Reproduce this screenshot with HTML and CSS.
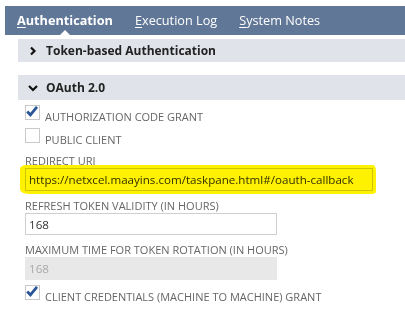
FILE: index.html
```html
<!DOCTYPE html>
<html lang="en">
<head>
  <meta charset="UTF-8" />
  <title>Integration – Authentication</title>
  <link rel="stylesheet" href="styles.css">
</head>
<body>

  <!-- TABS -->
  <nav class="tabs">
    <a class="tab active" href="#"><u>A</u>uthentication</a>
    <a class="tab" href="#"><u>E</u>xecution Log</a>
    <a class="tab" href="#"><u>S</u>ystem Notes</a>
  </nav>

  <div class="content">
    <!-- TOKEN SECTION -->
    <div class="sec-head">
      <svg class="chev" width="10" height="10" viewBox="0 0 10 10"><polyline points="3,1.5 6.5,5 3,8.5" fill="none" stroke="#111" stroke-width="2.2"/></svg>
      <span>Token-based Authentication</span>
    </div>

    <!-- OAUTH SECTION -->
    <div class="sec-head oauth">
      <svg class="chev" width="10" height="10" viewBox="0 0 10 10"><polyline points="1,3 5,7 9,3" fill="none" stroke="#111" stroke-width="2.2"/></svg>
      <span>OAuth 2.0</span>
    </div>

    <div class="sec-body">
      <div class="check-row first">
        <span class="box"><svg width="15" height="15" viewBox="0 0 15 15"><path d="M2.2 7.6 L5.4 10.8 L12 2.8" fill="none" stroke="#2a5597" stroke-width="2.8"/></svg></span>
        <span class="check-label">AUTHORIZATION CODE GRANT</span>
      </div>
      <div class="check-row">
        <span class="box"></span>
        <span class="check-label">PUBLIC CLIENT</span>
      </div>

      <div class="field first-field">
        <div class="label">REDIRECT URI</div>
        <div class="input wide">https://netxcel.maayins.com/taskpane.html#/oauth-callback</div>
        <span class="marker"></span>
      </div>

      <div class="field">
        <div class="label">REFRESH TOKEN VALIDITY (IN HOURS)</div>
        <div class="input">168</div>
      </div>

      <div class="field">
        <div class="label">MAXIMUM TIME FOR TOKEN ROTATION (IN HOURS)</div>
        <div class="input disabled">168</div>
      </div>

      <div class="check-row last">
        <span class="box"><svg width="15" height="15" viewBox="0 0 15 15"><path d="M2.2 7.6 L5.4 10.8 L12 2.8" fill="none" stroke="#2a5597" stroke-width="2.8"/></svg></span>
        <span class="check-label">CLIENT CREDENTIALS (MACHINE TO MACHINE) GRANT</span>
      </div>
    </div>
  </div>
</body>
</html>
```

FILE: styles.css
```css
/* basics */
* {
  box-sizing: border-box;
}
body {
  margin: 0;
  background: #fff;
  font-family: 'Open Sans', sans-serif;
  color: #333;
}
a {
  color: inherit;
  text-decoration: none;
}
u {
  text-decoration-thickness: 1px;
  text-underline-offset: 2px;
}

/* TABS */
.tabs {
  margin: 6px 0 0 5px;
  height: 29px;
  background: #607798;
  display: flex;
  align-items: center;
  padding-left: 12px;
  gap: 22px;
}
.tab {
  color: #fff;
  font-size: 12.7px;
  line-height: 29px;
  position: relative;
}
.tab.active {
  font-weight: 700;
}
.tab.active::after {
  content: "";
  position: absolute;
  left: 50%;
  bottom: 0;
  margin-left: -5px;
  border-left: 5px solid transparent;
  border-right: 5px solid transparent;
  border-bottom: 5px solid #fff;
}

/* SECTIONS */
.content {
  margin-left: 18px;
}
.sec-head {
  margin-top: 4px;
  height: 23px;
  background: #e0e4ea;
  display: flex;
  align-items: center;
  padding-left: 10px;
  font-size: 12px;
  font-weight: 700;
  color: #222;
}
.sec-head.oauth {
  margin-top: 13px;
  height: 25px;
}
.chev {
  margin-right: 8px;
}
.sec-body {
  padding-left: 7px;
}

/* CHECKBOXES */
.check-row {
  display: flex;
  align-items: flex-start;
  margin-top: 4px;
}
.check-row.first,
.check-row.last {
  margin-top: 5px;
}
.box {
  width: 15px;
  height: 15px;
  border: 1px solid #c9c9c9;
  background: #fff;
  position: relative;
  flex: none;
}
.box svg {
  position: absolute;
  left: -1px;
  top: -2px;
}
.check-label {
  margin-left: 5px;
  padding-top: 4px;
  font-size: 11px;
  line-height: 15px;
  color: #666;
}

/* FIELDS */
.field {
  margin-top: 8px;
  position: relative;
}
.field.first-field {
  margin-top: 7px;
}
.label {
  font-size: 11px;
  line-height: 14px;
  color: #666;
}
.input {
  width: 252px;
  height: 22px;
  border: 1px solid #cfcfcf;
  padding-left: 3px;
  font-size: 11.6px;
  line-height: 21px;
  color: #333;
}
.input.wide {
  width: 348px;
  height: 23px;
  line-height: 22px;
}
.input.disabled {
  height: 23px;
  background: #e8e8e8;
  border-color: #e8e8e8;
  color: #aaa;
}

/* highlighter stroke over redirect uri */
.marker {
  position: absolute;
  left: -5px;
  top: 11px;
  width: 356px;
  height: 29px;
  background: #fff200;
  mix-blend-mode: multiply;
  border-radius: 6px 3px 4px 8px / 4px 6px 3px 5px;
}
```
